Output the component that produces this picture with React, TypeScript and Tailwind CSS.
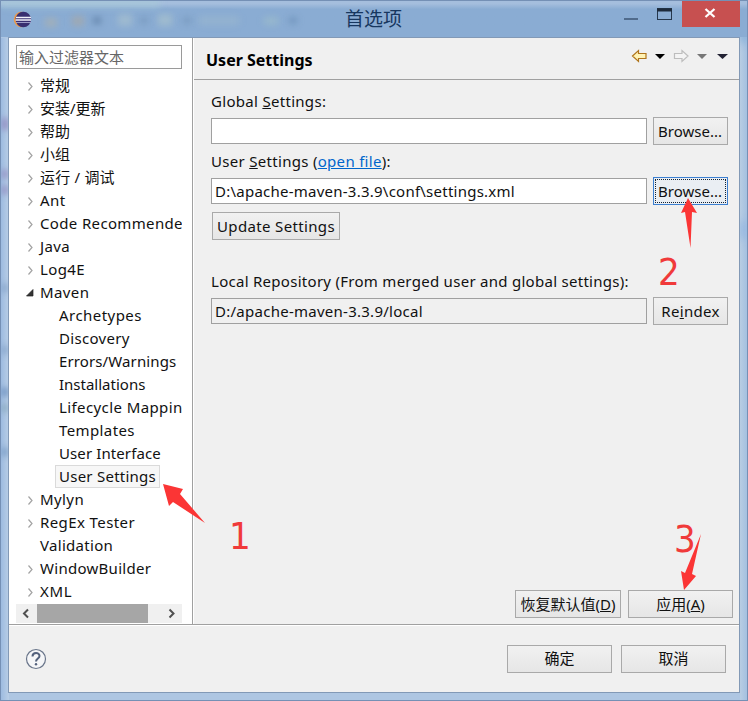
import React from 'react';

interface TreeItem {
  label: string;
  state: 'open' | 'closed' | 'leaf' | 'child';
  tracking?: string;
  selected?: boolean;
}

const treeItems: TreeItem[] = [
  { label: '常规', state: 'closed' },
  { label: '安装/更新', state: 'closed' },
  { label: '帮助', state: 'closed' },
  { label: '小组', state: 'closed' },
  { label: '运行 / 调试', state: 'closed', tracking: 'tracking-[0.2px]' },
  { label: 'Ant', state: 'closed', tracking: 'tracking-[0.4px]' },
  { label: 'Code Recommende', state: 'closed', tracking: 'tracking-[0.35px]' },
  { label: 'Java', state: 'closed', tracking: 'tracking-[0.4px]' },
  { label: 'Log4E', state: 'closed', tracking: 'tracking-[0.4px]' },
  { label: 'Maven', state: 'open', tracking: 'tracking-[0.4px]' },
  { label: 'Archetypes', state: 'child', tracking: 'tracking-[0.45px]' },
  { label: 'Discovery', state: 'child', tracking: 'tracking-[0.3px]' },
  { label: 'Errors/Warnings', state: 'child', tracking: 'tracking-[0.12px]' },
  { label: 'Installations', state: 'child' },
  { label: 'Lifecycle Mappin', state: 'child', tracking: 'tracking-[0.4px]' },
  { label: 'Templates', state: 'child', tracking: 'tracking-[0.4px]' },
  { label: 'User Interface', state: 'child', tracking: 'tracking-[0.1px]' },
  { label: 'User Settings', state: 'child', selected: true, tracking: 'tracking-[0.25px]' },
  { label: 'Mylyn', state: 'closed', tracking: 'tracking-[0.4px]' },
  { label: 'RegEx Tester', state: 'closed', tracking: 'tracking-[0.4px]' },
  { label: 'Validation', state: 'leaf', tracking: 'tracking-[0.3px]' },
  { label: 'WindowBuilder', state: 'closed', tracking: 'tracking-[0.28px]' },
  { label: 'XML', state: 'closed', tracking: 'tracking-[0.7px]' },
];

const TreeRow: React.FC<{ item: TreeItem }> = ({ item }) => (
  <div className={`flex h-[23px] items-center whitespace-nowrap ${item.state === 'child' ? 'pl-[39px]' : 'pl-[9px]'}`}>
    {item.state !== 'child' && (
      <svg className="h-[11px] w-[11px] shrink-0" viewBox="0 0 11 11">
        {item.state === 'closed' && <path d="M3.500 2.500 L7 6.500 L3.500 10.500" fill="none" stroke="#a3a3a3" strokeWidth="1.2" />}
        {item.state === 'open' && <path d="M8 2.500 V9 H1.500 Z" fill="#333" stroke="#222" strokeWidth="0.7" />}
      </svg>
    )}
    <span className={`border px-[3px] leading-[21px] ${item.tracking ?? ''} ${item.selected ? 'border-[#dadada] bg-[#f7f7f7]' : 'border-transparent'}`}>
      {item.label}
    </span>
  </div>
);

interface ButtonProps {
  className: string;
  focused?: boolean;
  children: React.ReactNode;
}

const Button: React.FC<ButtonProps> = ({ className, focused, children }) => (
  <button
    className={`flex h-7 shrink-0 items-center justify-center whitespace-nowrap border p-px ${
      focused ? 'border-[#3c7fd0] bg-[#eaeef3]' : 'border-[#a9a9a9] bg-linear-to-b from-[#f1f1f1] to-[#e6e6e6]'
    } ${className}`}
  >
    <span className={`flex h-full w-full items-center justify-center ${focused ? 'border border-dotted border-[#112233]' : ''}`}>{children}</span>
  </button>
);

const TitleBar: React.FC = () => (
  <div className="relative flex h-[37px] shrink-0 items-start bg-linear-to-b from-[#a5bedd] from-10% to-[#8aacd3] to-25%">
    {/* Toolbar shapes behind the glass */}
    <div className="absolute inset-0 overflow-hidden">
      <div className="absolute -top-1 left-0 h-3 w-40 bg-[#a8cbd8]/50 blur-[3px]"></div>
      <div className="absolute left-[45px] top-[18px] h-[9px] w-[12px] bg-[#b5b2a3]/50 blur-[3px]"></div>
      <div className="absolute left-[72px] top-[16px] h-[10px] w-[12px] bg-[#aba69f]/60 blur-[3px]"></div>
      <div className="absolute left-[93px] top-[17px] h-[7px] w-[8px] bg-[#59799f]/70 blur-[3px]"></div>
      <div className="absolute left-[118px] top-[14px] h-[12px] w-[14px] bg-[#b2c8ce]/50 blur-[3px]"></div>
      <div className="absolute left-[140px] top-[17px] h-[7px] w-[8px] bg-[#7193b8]/60 blur-[3px]"></div>
      <div className="absolute left-[158px] top-[14px] h-[12px] w-[14px] bg-[#b4c9cb]/50 blur-[3px]"></div>
      <div className="absolute left-[183px] top-[17px] h-[7px] w-[8px] bg-[#7193b8]/60 blur-[3px]"></div>
      <div className="absolute left-[199px] top-[16px] h-[9px] w-[40px] bg-[#9db9ce]/50 blur-[3px]"></div>
      <div className="absolute left-[264px] top-[17px] h-[8px] w-[14px] bg-[#a4c3c8]/50 blur-[3px]"></div>
      <div className="absolute left-[289px] top-[17px] h-[7px] w-[8px] bg-[#6488b2]/60 blur-[3px]"></div>
    </div>
    <svg className="relative ml-[13px] mt-[11px] h-[17px] w-[19px]" viewBox="0 0 19 17">
      <circle cx="8.500" cy="8.500" r="7.700" fill="#f09a45" />
      <circle cx="10.300" cy="8.500" r="7.800" fill="#392f70" />
      <path d="M3 6.500 H18 M2.500 9 H18" stroke="#f2f2fa" strokeWidth="1.7" />
      <path d="M3 11.500 H18" stroke="#9d9cc6" strokeWidth="1" />
    </svg>
    <div className="relative ml-[313px] mt-[7px] text-[19px] leading-6 text-[#17375f]">首选项</div>
    <div className="relative ml-auto mr-2 flex">
      <svg className="h-[28px] w-[58px]" viewBox="0 0 58 28">
        <path d="M0 19 H14" stroke="#506b8c" strokeWidth="2" />
        <rect x="33.500" y="8.500" width="14" height="11" fill="none" stroke="#26384d" />
        <path d="M33 10 H48" stroke="#1d2a3b" strokeWidth="3" />
      </svg>
      <div className="flex h-[27px] w-[58px] items-center justify-center bg-[#c75050] pb-px pr-[2px]">
        <svg className="h-[10px] w-[12px]" viewBox="0 0 12 10">
          <path d="M1.500 1 L10.500 9 M10.500 1 L1.500 9" stroke="#fff" strokeWidth="2.300" />
        </svg>
      </div>
    </div>
  </div>
);

// Blurred editor content showing through the window frame
const FrameGlass: React.FC = () => (
  <div className="absolute inset-0">
    <div className="absolute bottom-0 left-0 top-[37px] w-[8px] overflow-hidden bg-linear-to-r from-[#9dbbe0] to-[#b9cee6]">
      <div className="absolute left-0 top-[80px] h-[12px] w-[8px] bg-[#8b80b8]/70 blur-[3px]"></div>
      <div className="absolute left-0 top-[132px] h-[8px] w-[8px] bg-[#8b80b8]/70 blur-[3px]"></div>
      <div className="absolute left-0 top-[148px] h-[8px] w-[8px] bg-[#8b80b8]/70 blur-[3px]"></div>
      <div className="absolute left-0 top-[246px] h-[8px] w-[8px] bg-[#7897bf]/60 blur-[3px]"></div>
      <div className="absolute left-0 top-[308px] h-[8px] w-[8px] bg-[#7897bf]/60 blur-[3px]"></div>
      <div className="absolute left-0 top-[350px] h-[8px] w-[8px] bg-[#587fb2]/70 blur-[3px]"></div>
      <div className="absolute left-0 top-[366px] h-[8px] w-[8px] bg-[#7c9eaf]/60 blur-[3px]"></div>
      <div className="absolute left-0 top-[410px] h-[8px] w-[8px] bg-[#6289b8]/60 blur-[3px]"></div>
    </div>
    <div className="absolute bottom-0 right-0 top-0 w-[7px] overflow-hidden bg-linear-to-r from-[#b8cde3] to-[#a4c0e0]">
      <div className="absolute left-0 top-[20px] h-[22px] w-[8px] bg-[#79a8d6]/80 blur-[4px]"></div>
      <div className="absolute left-0 top-[220px] h-[18px] w-[8px] bg-[#8fb3e1]/80 blur-[4px]"></div>
    </div>
  </div>
);

const NavIcons: React.FC = () => (
  <svg className="h-4 w-[100px]" viewBox="0 0 100 16">
    <path d="M1.500 8 L7.500 2.500 V5.500 H15 V10.500 H7.500 V13.500 Z" fill="#fff3b5" stroke="#b0751b" strokeWidth="1.200" />
    <path d="M24 6 H34 L29 11 Z" fill="#000" />
    <path d="M57 8 L51 2.500 V5.500 H43.500 V10.500 H51 V13.500 Z" fill="#f4f4f4" stroke="#bdbdbd" strokeWidth="1.200" />
    <path d="M66 6 H76 L71 11 Z" fill="#777" />
    <path d="M86 6 H97 L91.500 11 Z" fill="#222233" />
  </svg>
);

const Sidebar: React.FC = () => (
  <div className="flex w-[184px] shrink-0 flex-col border-r border-[#a0a0a0] bg-white pl-[7px] pr-[10px] pt-[7px]">
    <div className="mb-[5px] h-[24px] shrink-0 border border-[#9a9a9a] pl-[2px] leading-[22px] text-[#666]">输入过滤器文本</div>
    <div className="shrink-0 overflow-hidden">
      {treeItems.map((item) => (
        <TreeRow key={item.label} item={item} />
      ))}
    </div>
    <div className="mt-px flex h-[19px] shrink-0 items-center bg-[#f0f0f0]">
      <svg className="h-[19px] w-[21px]" viewBox="0 0 21 19">
        <path d="M12 5.500 L8 9.500 L12 13.500" fill="none" stroke="#505050" strokeWidth="2" />
      </svg>
      <div className="h-full w-[111px] bg-[#a6a6a6]"></div>
      <svg className="ml-auto h-[19px] w-[21px]" viewBox="0 0 21 19">
        <path d="M8.500 5.500 L12.500 9.500 L8.500 13.500" fill="none" stroke="#505050" strokeWidth="2" />
      </svg>
    </div>
  </div>
);

const SettingsPage: React.FC = () => (
  <div className="flex flex-1 flex-col border-l border-white">
    <div className="flex h-[42px] shrink-0 items-center justify-between border-b border-[#a0a0a0] pl-[12px] pr-[8px]">
      <h1 className="pt-[2px] text-[16px] font-bold text-black">User Settings</h1>
      <div className="pb-[5px]">
        <NavIcons />
      </div>
    </div>
    <div className="flex flex-1 flex-col pl-[17px] pr-[11px] pt-[11px]">
      <div className="h-[26px] leading-[20px] tracking-[0.3px]">Global <u>S</u>ettings:</div>
      <div className="flex h-[28px] items-center justify-between">
        <div className="h-[26px] w-[436px] border border-[#a0a0a0] bg-white"></div>
        <Button className="w-[75px] pr-[2px]">Browse...</Button>
      </div>
      <div className="mt-[6px] h-[26px] leading-[20px] tracking-[0.3px]">
        User <u>S</u>ettings (<a className="text-[#0066cc] underline">open file</a>):
      </div>
      <div className="flex h-[28px] items-center justify-between">
        <div className="h-[26px] w-[436px] border border-[#a0a0a0] bg-white pl-[3px] leading-[24px] tracking-[0.24px]">D:\apache-maven-3.3.9\conf\settings.xml</div>
        <Button className="w-[75px]" focused><span className="-ml-px">Browse...</span></Button>
      </div>
      <div className="mt-[7px] flex pl-px">
        <Button className="w-[128px] tracking-[0.35px]">Update Settings</Button>
      </div>
      <div className="mt-[31px] h-[26px] leading-[20px] tracking-[0.28px]">Local Repository (From merged user and global settings):</div>
      <div className="flex h-[28px] items-center justify-between">
        <div className="h-[26px] w-[436px] border border-[#a0a0a0] pl-[3px] leading-[24px] tracking-[0.26px]">D:/apache-maven-3.3.9/local</div>
        <Button className="w-[75px] tracking-[0.3px]"><span>Re<u>i</u>ndex</span></Button>
      </div>
      <div className="-mr-[5px] mb-[6px] mt-auto flex justify-end gap-[7px]">
        <Button className="w-[106px]"><span>恢复默认值(<u>D</u>)</span></Button>
        <Button className="w-[105px]"><span>应用(<u>A</u>)</span></Button>
      </div>
    </div>
  </div>
);

const Annotations: React.FC = () => (
  <div className="pointer-events-none absolute -left-px -top-px h-[701px] w-[748px] font-['DejaVu_Sans_Condensed','DejaVu_Sans',sans-serif] text-[38px] leading-[40px] text-[#f03a3a]">
    <svg className="absolute inset-0 h-[701px] w-[748px]" viewBox="0 0 748 701">
      <g fill="#fb3535">
        <path d="M163 484 L183 489 L180 494 L205 523 L173 502 L169 506 Z" />
        <path d="M688 198 L697 213 L692 212 L690.500 248 L685 212 L681 213 Z" />
        <path d="M701 534 L692 574 L696 576 L684 590 L681 571 L685 573 Z" />
      </g>
    </svg>
    <div className="absolute left-[229px] top-[516px]">1</div>
    <div className="absolute left-[658px] top-[252px]">2</div>
    <div className="absolute left-[674px] top-[519px]">3</div>
  </div>
);

const App: React.FC = () => {
  return (
    <div className="relative flex h-[701px] w-[748px] flex-col overflow-hidden border border-[#7590b5] bg-[#aec6e2] font-['Noto_Sans','Noto_Sans_CJK_SC',sans-serif] text-[15px] text-[#111]">
      <FrameGlass />
      <div className="relative -mt-px flex h-[37px] shrink-0 flex-col">
        <div className="-ml-px mr-[-1px]">
          <TitleBar />
        </div>
      </div>
      <div className="relative mx-[7px] flex h-[656px] shrink-0 flex-col border border-[#8299b6] bg-[#f0f0f0]">
        <div className="flex h-[587px] shrink-0 border-b border-[#a0a0a0]">
          <Sidebar />
          <SettingsPage />
        </div>
        <div className="flex flex-1 items-center border-t border-white pb-px pl-[16px] pr-[13px]">
          <svg className="h-[22px] w-[22px]" viewBox="0 0 22 22">
            <circle cx="11" cy="11" r="9.500" fill="#f5f6f8" stroke="#69758a" strokeWidth="1.200" />
            <path d="M7.500 8.500 C7.500 3.800 14.500 4 14.500 8 C14.500 10.500 11 10.500 11 13.500" fill="none" stroke="#53617c" strokeWidth="2" />
            <circle cx="11" cy="16.300" r="1.200" fill="#53617c" />
          </svg>
          <div className="ml-auto flex gap-[9px]">
            <Button className="w-[105px]">确定</Button>
            <Button className="w-[105px]">取消</Button>
          </div>
        </div>
      </div>
      <Annotations />
    </div>
  );
};

export default App;
